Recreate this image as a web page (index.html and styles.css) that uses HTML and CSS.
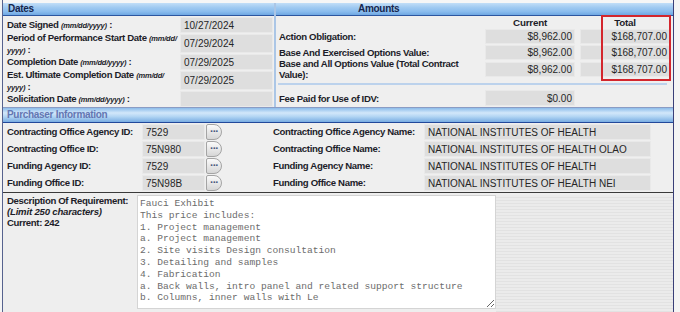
FILE: index.html
```html
<!DOCTYPE html>
<html lang="en">
<head>
  <meta charset="UTF-8">
  <title>Contract Details</title>
  <link rel="stylesheet" href="styles.css">
</head>
<body>
  <div class="form">
    <div class="top">
      <!-- Dates -->
      <section class="dates">
        <div class="bar">Dates</div>
        <div class="date-rows">
          <div class="lbl">Date Signed <i>(mm/dd/yyyy)</i> :</div>
          <div class="val">10/27/2024</div>
          <div class="lbl">Period of Performance Start Date <i>(mm/dd/</i><br><i>yyyy)</i> :</div>
          <div class="val">07/29/2024</div>
          <div class="lbl">Completion Date <i>(mm/dd/yyyy)</i> :</div>
          <div class="val">07/29/2025</div>
          <div class="lbl">Est. Ultimate Completion Date <i>(mm/dd/</i><br><i>yyyy)</i> :</div>
          <div class="val">07/29/2025</div>
          <div class="lbl">Solicitation Date <i>(mm/dd/yyyy)</i> :</div>
          <div class="val"></div>
        </div>
      </section>

      <!-- Amounts -->
      <section class="amounts">
        <div class="bar bar-amounts">Amounts</div>
        <div class="amt-grid">
          <div></div>
          <div class="colhead">Current</div>
          <div class="colhead">Total</div>

          <div class="lbl">Action Obligation:</div>
          <div class="val num">$8,962.00</div>
          <div class="val num">$168,707.00</div>

          <div class="lbl">Base And Exercised Options Value:</div>
          <div class="val num">$8,962.00</div>
          <div class="val num">$168,707.00</div>

          <div class="lbl">Base and All Options Value (Total Contract Value):</div>
          <div class="val num">$8,962.00</div>
          <div class="val num">$168,707.00</div>
        </div>
        <div class="amt-sep"></div>
        <div class="amt-grid fee-row">
          <div class="lbl">Fee Paid for Use of IDV:</div>
          <div class="val num">$0.00</div>
        </div>
        <div class="total-mark"></div>
      </section>
    </div>

    <div class="bar bar-purchaser">Purchaser Information</div>
    <div class="purchaser">
      <div class="lbl">Contracting Office Agency ID:</div>
      <div class="val">7529</div>
      <div><span class="dots">&middot;&middot;&middot;</span></div>
      <div class="lbl">Contracting Office Agency Name:</div>
      <div class="val">NATIONAL INSTITUTES OF HEALTH</div>

      <div class="lbl">Contracting Office ID:</div>
      <div class="val">75N980</div>
      <div><span class="dots">&middot;&middot;&middot;</span></div>
      <div class="lbl">Contracting Office Name:</div>
      <div class="val">NATIONAL INSTITUTES OF HEALTH OLAO</div>

      <div class="lbl">Funding Agency ID:</div>
      <div class="val">7529</div>
      <div><span class="dots">&middot;&middot;&middot;</span></div>
      <div class="lbl">Funding Agency Name:</div>
      <div class="val">NATIONAL INSTITUTES OF HEALTH</div>

      <div class="lbl">Funding Office ID:</div>
      <div class="val">75N98B</div>
      <div><span class="dots">&middot;&middot;&middot;</span></div>
      <div class="lbl">Funding Office Name:</div>
      <div class="val">NATIONAL INSTITUTES OF HEALTH NEI</div>
    </div>

    <div class="desc">
      <div class="lbl desc-lbl">
        Description Of Requirement:<br>
        <i>(Limit 250 characters)</i><br>
        Current: 242
      </div>
      <textarea class="desc-text" readonly>Fauci Exhibit
This price includes:
1. Project management
a. Project management
2. Site visits Design consultation
3. Detailing and samples
4. Fabrication
a. Back walls, intro panel and related support structure
b. Columns, inner walls with Le</textarea>
      <div class="desc-fill"></div>
    </div>
  </div>
</body>
</html>
```

FILE: styles.css
```css
body {
  margin: 0;
  background-color: #f4f4f4;
  font-family: "Liberation Sans", Arial, sans-serif;
  color: #1d1d29;
  overflow: hidden;
}

.form {
  width: 670px;
  margin-left: 2px;
  padding-top: 3px;
  border-left: 1px solid #56628e;
  border-right: 1px solid #3a3f78;
  background-color: #f6f6f6;
}

.top {
  display: grid;
  grid-template-columns: 271px 1fr;
}

/* header bars */
.bar {
  height: 12px;
  line-height: 12px;
  padding-left: 5px;
  font-size: 10px;
  font-weight: bold;
  letter-spacing: -0.3px;
  color: #16264e;
  background: linear-gradient(#c2def8 0%, #a2cbf1 35%, #8bbdee 70%, #6ea7e2 100%);
  border-bottom: 1px solid #2c56a0;
}

.bar-amounts {
  padding-left: 82px;
}

.bar-purchaser {
  height: 14px;
  line-height: 14px;
  padding-left: 4px;
  color: #6476b2;
  border-top: 1px solid #8a9cc4;
  background: linear-gradient(#8cbcea 0%, #d2e7fa 35%, #b4d6f4 60%, #78ace2 100%);
  border-bottom: 1px solid #22489a;
}

/* labels and values */
.lbl {
  font-size: 9.6px;
  font-weight: bold;
  letter-spacing: -0.35px;
  line-height: 11px;
  color: #1d1d29;
}

.lbl i {
  font-size: 7.5px;
  letter-spacing: -0.2px;
}

.val {
  background-color: #dedede;
  border: 1px solid #e9e9e9;
  box-sizing: border-box;
  font-size: 10px;
  color: #262626;
  padding-left: 3px;
  display: flex;
  align-items: center;
  white-space: nowrap;
}

.val.num {
  justify-content: flex-end;
  padding-left: 0;
  padding-right: 2px;
}

/* dates */
.dates {
  background-color: #efefef;
}

.date-rows {
  display: grid;
  grid-template-columns: 173px 93px;
  grid-template-rows: 16px 19px 16px 19px 16px;
  row-gap: 1px;
  padding: 1px 0 0 4px;
  align-items: center;
}

.date-rows .lbl {
  white-space: nowrap;
}

.date-rows .val {
  align-self: stretch;
}

/* amounts */
.amounts {
  position: relative;
  background-color: #efefef;
  border-left: 2px solid #abc6e6;
  padding-bottom: 1px;
}

.amt-grid {
  display: grid;
  grid-template-columns: 201px 90px 90px;
  grid-template-rows: 12px 16px 16px 18px;
  column-gap: 5px;
  padding-left: 3px;
  align-items: center;
}

.amt-grid .val {
  height: 15px;
}

.colhead {
  font-size: 9.8px;
  font-weight: bold;
  text-align: center;
  letter-spacing: -0.2px;
}

.amt-sep {
  height: 2px;
  margin: 5px 6px 0 2px;
  background-color: #bcd2ec;
}

.fee-row {
  grid-template-rows: 16px;
  margin-top: 5px;
}

.fee-row .val {
  height: 16px;
}

.total-mark {
  position: absolute;
  left: 325px;
  top: 12px;
  width: 70px;
  height: 66px;
  box-sizing: border-box;
  border: 2px solid #d3262d;
}

/* purchaser information */
.purchaser {
  display: grid;
  grid-template-columns: 135px 63px 68px 151px 227px;
  grid-template-rows: repeat(4, 17px);
  padding: 1px 0 0 4px;
  background-color: #efefef;
  align-items: start;
}

.purchaser .lbl {
  line-height: 16px;
}

.purchaser .val {
  height: 16px;
}

.dots {
  display: block;
  width: 14px;
  height: 14px;
  margin-left: 1px;
  border: 1px solid #a4a4a4;
  border-radius: 2px 8px 8px 2px;
  background: linear-gradient(#fafafa, #d6d6d6);
  font-size: 11px;
  font-weight: bold;
  line-height: 13px;
  text-align: center;
  letter-spacing: -1px;
  color: #4a5a80;
}

/* description */
.desc {
  display: grid;
  grid-template-columns: 134px 359px 1fr;
  height: 119px;
  border-top: 1px solid #3a3a3a;
  background-color: #eeeeee;
}

.desc-lbl {
  padding: 2px 0 0 4px;
  line-height: 11px;
}

.desc-lbl i {
  font-size: 9.6px;
}

.desc-text {
  margin: 2px 0 0 0;
  height: 114px;
  box-sizing: border-box;
  padding: 2px 2px 0 2px;
  border: 1px solid #d4d4d4;
  background-color: #fff;
  font-family: "Liberation Mono", "DejaVu Sans Mono", monospace;
  font-size: 9.6px;
  line-height: 11.8px;
  color: #6c6c6c;
  resize: both;
  overflow: hidden;
  outline: none;
}

.desc-fill {
  margin-top: 2px;
  background: repeating-linear-gradient(#ebebeb 0 2px, #e2e2e2 2px 3px);
}
```
